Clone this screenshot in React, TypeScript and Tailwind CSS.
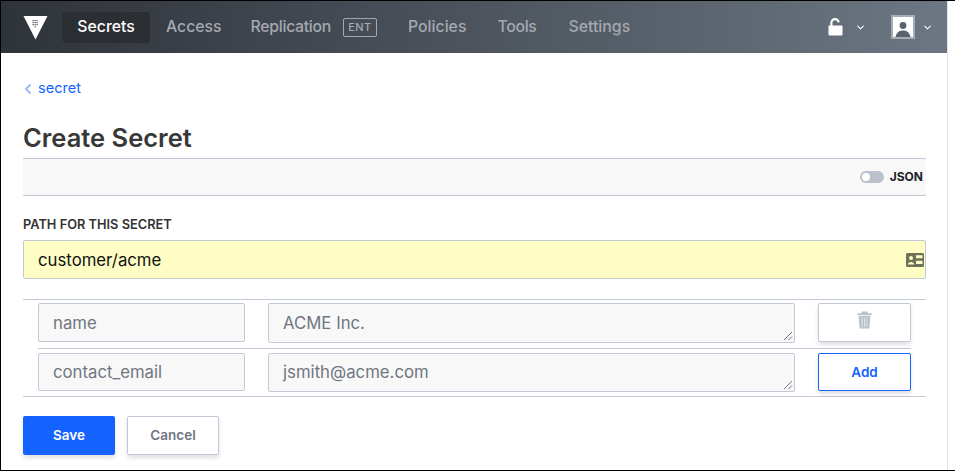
import { ChevronDown, ChevronLeft } from "lucide-react";

const navItems = ["Access", "Replication", "Policies", "Tools", "Settings"];

function VaultLogo() {
  return (
    <svg width="25" height="25" viewBox="0 0 25 25" className="shrink-0">
      <path d="M0.5 1 H24.5 L12.5 24.5 Z" fill="#ffffff" />
      <g fill="#4a5058">
        <rect x="9.5" y="5" width="1.2" height="1.2" />
        <rect x="11.5" y="5" width="1.2" height="1.2" />
        <rect x="13.5" y="5" width="1.2" height="1.2" />
        <rect x="9.5" y="7" width="1.2" height="1.2" />
        <rect x="11.5" y="7" width="1.2" height="1.2" />
        <rect x="13.5" y="7" width="1.2" height="1.2" />
        <rect x="9.5" y="9" width="1.2" height="1.2" />
        <rect x="11.5" y="9" width="1.2" height="1.2" />
        <rect x="13.5" y="9" width="1.2" height="1.2" />
        <rect x="11.5" y="11" width="1.2" height="1.2" />
      </g>
    </svg>
  );
}

function UnlockIcon() {
  return (
    <svg width="15" height="18" viewBox="0 0 15 18">
      <path d="M3.4 9 V5 a3.6 3.6 0 0 1 7.2 -0.6" fill="none" stroke="#fff" strokeWidth="2.2" />
      <rect x="0.5" y="7.5" width="14" height="10" rx="1" fill="#fff" />
    </svg>
  );
}

function UserIcon() {
  return (
    <div className="w-[24px] h-[24px] border-2 border-[#a4acb6] bg-[#a4acb6] shrink-0">
      <svg width="20" height="20" viewBox="0 0 20 20" className="block">
        <rect width="20" height="20" fill="#fff" />
        <circle cx="10" cy="8.5" r="3.4" fill="#5a626c" />
        <path d="M2.5 20 C3.5 15 6.5 13.5 10 13.5 C13.5 13.5 16.5 15 17.5 20 Z" fill="#5a626c" />
      </svg>
    </div>
  );
}

function CardIcon() {
  return (
    <svg width="18" height="14" viewBox="0 0 18 14">
      <rect x="0" y="0" width="18" height="14" rx="1.5" fill="#6f705c" />
      <circle cx="5" cy="5" r="2" fill="#fdfdc4" />
      <path d="M1.8 11.5 C2 8 8 8 8.2 11.5 Z" fill="#fdfdc4" />
      <rect x="10" y="2.2" width="6.5" height="3" fill="#fdfdc4" />
      <rect x="10" y="7.8" width="6.5" height="3.2" fill="#fdfdc4" />
    </svg>
  );
}

function TrashIcon() {
  return (
    <svg width="15" height="18" viewBox="0 0 15 18" className="mb-[5px]">
      <path d="M0.5 2.2 H4.5 V0.5 H10.5 V2.2 H14.5 V4.2 H0.5 Z" fill="#bac1cc" />
      <path d="M1.6 5 H13.4 L12.4 17.5 H2.6 Z" fill="#bac1cc" />
      <rect x="4.6" y="6.5" width="1" height="9.5" fill="#fff" opacity="0.55" />
      <rect x="7" y="6.5" width="1" height="9.5" fill="#fff" opacity="0.55" />
      <rect x="9.4" y="6.5" width="1" height="9.5" fill="#fff" opacity="0.55" />
    </svg>
  );
}

function ResizeGrip() {
  return (
    <svg width="10" height="10" viewBox="0 0 10 10" className="absolute right-[1px] bottom-[1px]">
      <path d="M1 9 L9 1 M5.5 9 L9 5.5" stroke="#777" strokeWidth="1" fill="none" />
    </svg>
  );
}

function KvRow({ name, value, last }: { name: string; value: string; last?: boolean }) {
  return (
    <div className={`flex ${last ? "h-[47px] pt-[4px]" : "h-[49px] pt-[3px] border-b border-[#c2c8d6]"} ml-[15px] mr-[15px]`}>
      <div className={`w-[207px] ${last ? "h-[38px] pt-[1px]" : "h-[39px] pt-[3px]"} border border-[#c2c8d6] rounded-[2px] bg-[#f8f8f8] px-[14px] flex items-center text-[16.75px] text-[#6f7682] shrink-0`}>
        {name}
      </div>
      <div className={`relative ml-[23px] w-[527px] ${last ? "h-[39px]" : "h-[40px] pt-[1px]"} border border-[#c2c8d6] rounded-[2px] bg-[#f8f8f8] px-[14px] flex items-center text-[16.75px] text-[#6f7682] shrink-0`}>
        {value}
        <ResizeGrip />
      </div>
      {last ? (
        <div className="ml-[23px] w-[93px] h-[38px] border border-[#1563ff] rounded-[2px] bg-white flex items-center justify-center text-[13.5px] font-semibold text-[#1563ff] shadow-[0_3px_4px_rgba(0,0,0,0.12)] shrink-0">
          Add
        </div>
      ) : (
        <div className="ml-[23px] w-[93px] h-[39px] border border-[#c2c8d6] rounded-[2px] bg-white flex items-center justify-center shadow-[0_3px_4px_rgba(0,0,0,0.12)] shrink-0">
          <TrashIcon />
        </div>
      )}
    </div>
  );
}

export default function App() {
  return (
    <div className="w-[955px] h-[471px] border-l border-t border-b border-black bg-white overflow-hidden font-['Inter',sans-serif] flex flex-col">
      <div className="flex flex-1 min-h-0">
        <div className="w-[947px] border-r border-[#e4e4e4] flex flex-col">
          <nav className="h-[52px] shrink-0 bg-gradient-to-r from-[#2f333a] to-[#6c7783] flex items-center pl-[22px] text-[15.8px] font-medium text-[#a4a9b1]">
            <VaultLogo />
            <div className="ml-[14px] h-[31px] w-[88px] rounded-[4px] bg-[#2b2e33] text-white flex items-center justify-center">
              Secrets
            </div>
            <span className="ml-[16px]">{navItems[0]}</span>
            <span className="ml-[29px] tracking-[-0.3px]">{navItems[1]}</span>
            <span className="ml-[12px] h-[19px] w-[34px] border border-[#a4a9b1] rounded-[2px] text-[11px] tracking-[0.5px] flex items-center justify-center">ENT</span>
            <span className="ml-[31px]">{navItems[2]}</span>
            <span className="ml-[31px] tracking-[-0.3px]">{navItems[3]}</span>
            <span className="ml-[32px]">{navItems[4]}</span>
            <div className="ml-auto flex items-center pr-[14px]">
              <UnlockIcon />
              <ChevronDown size={11} strokeWidth={2.2} className="ml-[12px] text-white mr-[25px]" />
              <UserIcon />
              <ChevronDown size={11} strokeWidth={2.2} className="ml-[7px] text-white" />
            </div>
          </nav>

          <main className="flex-1 pl-[22px] pr-[21px]">
            <div className="h-[36px] mt-[18px] flex items-center text-[14.6px] text-[#1563ff]">
              <ChevronLeft size={16} strokeWidth={3} className="text-[#9dbcfb] -ml-[3px]" />
              <span className="ml-[2px]">secret</span>
            </div>
            <h1 className="mt-[16px] h-[35px] text-[25.5px] leading-[30px] font-semibold text-[#383838]">Create Secret</h1>
            <div className="h-[38px] border-y border-[#c2c8d6] bg-[#f8f8f8] flex items-center justify-end pr-[3px]">
              <div className="relative w-[24px] h-[12px] rounded-full bg-[#bac1cc]">
                <div className="absolute left-[2px] top-[2px] w-[8px] h-[8px] rounded-full bg-white" />
              </div>
              <span className="ml-[6px] text-[12px] font-bold text-[#1f2229]">JSON</span>
            </div>
            <label className="block mt-[21px] text-[12.8px] leading-[16px] font-semibold text-[#333333]">PATH FOR THIS SECRET</label>
            <div className="mt-[7px] h-[39px] border border-[#c2c8d6] rounded-[2px] bg-[#fdfdc4] pl-[14px] pr-[1px] flex items-center justify-between text-[16.75px] text-[#111]">
              <span className="pt-[3px]">customer/acme</span>
              <CardIcon />
            </div>
            <div className="mt-[20px] border-y border-[#c2c8d6]">
              <KvRow name="name" value="ACME Inc." />
              <KvRow name="contact_email" value="jsmith@acme.com" last />
            </div>
            <div className="mt-[19px] flex gap-[12px]">
              <div className="w-[92px] h-[39px] rounded-[2px] bg-[#1563ff] flex items-center justify-center text-[13.5px] font-semibold text-white shadow-[0_3px_4px_rgba(0,0,0,0.12)]">
                Save
              </div>
              <div className="w-[92px] h-[39px] rounded-[2px] border border-[#c2c8d6] bg-white flex items-center justify-center text-[13.5px] font-semibold text-[#6f7682] shadow-[0_3px_4px_rgba(0,0,0,0.12)]">
                Cancel
              </div>
            </div>
          </main>
        </div>
      </div>
    </div>
  );
}
